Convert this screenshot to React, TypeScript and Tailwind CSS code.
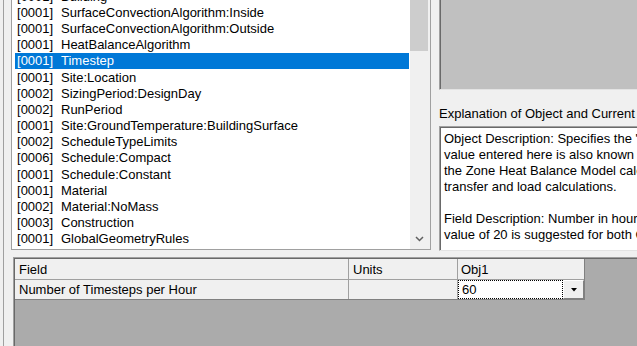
import React from "react";

const items: [string, string][] = [
  ["0001", "Building"],
  ["0001", "SurfaceConvectionAlgorithm:Inside"],
  ["0001", "SurfaceConvectionAlgorithm:Outside"],
  ["0001", "HeatBalanceAlgorithm"],
  ["0001", "Timestep"],
  ["0001", "Site:Location"],
  ["0002", "SizingPeriod:DesignDay"],
  ["0002", "RunPeriod"],
  ["0001", "Site:GroundTemperature:BuildingSurface"],
  ["0002", "ScheduleTypeLimits"],
  ["0006", "Schedule:Compact"],
  ["0001", "Schedule:Constant"],
  ["0001", "Material"],
  ["0002", "Material:NoMass"],
  ["0003", "Construction"],
  ["0001", "GlobalGeometryRules"],
];

const explanation = [
  'Object Description: Specifies the "basic" timestep for the simulation. The',
  "value entered here is also known as the Zone Timestep.  This is used in",
  "the Zone Heat Balance Model calculation as the driving timestep for heat",
  "transfer and load calculations.",
  "",
  "Field Description:  Number in hour: normal validity 4 to 60: 6 suggested",
  "value of 20 is suggested for both ConductionFiniteDifference and",
];

export default function App() {
  return (
    <div
      className="w-[637px] h-[346px] overflow-hidden bg-[#f0f0f0] flex text-[13px] leading-none text-black"
      style={{ fontFamily: '"Liberation Sans", Arial, sans-serif' }}
    >
      {/* left strip */}
      <div className="w-[11px] shrink-0 pl-[3px]">
        <div className="w-px h-full bg-[#a0a0a0]" />
      </div>

      {/* main column */}
      <div className="flex-1 flex flex-col min-w-0">
        {/* top section */}
        <div className="h-[251px] flex shrink-0">
          {/* listbox */}
          <div className="w-[420px] h-[250px] flex border-l border-b border-[#a0a0a0] shrink-0">
            <div className="w-[398px] bg-white overflow-hidden">
              <div className="mt-[-12px] pl-[3px] pr-[1px]">
                {items.map(([n, name], i) => {
                  const sel = name === "Timestep";
                  return (
                    <div
                      key={i}
                      className={
                        "h-[16.2px] flex items-center whitespace-nowrap " +
                        (sel ? "bg-[#0078d7] text-white" : "")
                      }
                    >
                      <span className="w-[46px] pl-[2px] shrink-0">[{n}]</span>
                      <span>{name}</span>
                    </div>
                  );
                })}
              </div>
            </div>
            {/* scrollbar */}
            <div className="w-[20px] bg-[#f0f0f0] flex flex-col justify-between">
              <div className="w-[18px] h-[51px] bg-[#cdcdcd]" />
              <div className="h-[20px] flex items-center justify-center pr-[2px]">
                <svg width="9" height="6" viewBox="0 0 9 6">
                  <path d="M1 1 L4.5 4.5 L8 1" fill="none" stroke="#606060" strokeWidth="1.5" />
                </svg>
              </div>
            </div>
            <div className="w-px bg-[#a0a0a0]" />
          </div>

          <div className="w-[8px] shrink-0" />

          {/* right column */}
          <div className="flex-1 flex flex-col min-w-0">
            <div className="h-[90px] shrink-0 bg-[#c0c0c0] border-l border-b border-l-[#a0a0a0] border-b-[#e3e3e3] shadow-[inset_1px_0_0_#696969]" />
            <div className="h-[36px] shrink-0 flex items-center whitespace-nowrap pt-[10px]">
              Explanation of Object and Current Field
            </div>
            <div className="flex-1 bg-white border-l border-t border-b border-l-[#a0a0a0] border-t-[#a0a0a0] border-b-[#e3e3e3] shadow-[inset_1px_1px_0_#696969] overflow-hidden pl-[4px] pt-[3px]">
              {explanation.map((l, i) => (
                <div key={i} className="h-[16px] flex items-center whitespace-nowrap">
                  {l || "\u00a0"}
                </div>
              ))}
            </div>
          </div>
        </div>

        <div className="h-[6px] shrink-0" />

        {/* grid */}
        <div className="flex-1 ml-[2px] bg-[#ababab] border-l border-t border-[#a0a0a0] shadow-[inset_1px_1px_0_#696969] pl-px pt-px">
          <div className="w-[570px] border-r border-b border-[#808080]">
            <div className="flex h-[21px] bg-[#f0f0f0] border-b border-[#a0a0a0]">
              <div className="w-[334px] border-r border-[#a0a0a0] pl-[4px] flex items-center">Field</div>
              <div className="w-[109px] border-r border-[#a0a0a0] pl-[4px] flex items-center">Units</div>
              <div className="flex-1 pl-[3px] flex items-center">Obj1</div>
            </div>
            <div className="flex h-[19px] bg-[#f0f0f0]">
              <div className="w-[334px] border-r border-[#a0a0a0] pl-[4px] flex items-center whitespace-nowrap">
                Number of Timesteps per Hour
              </div>
              <div className="w-[109px] border-r border-[#a0a0a0]" />
              <div className="flex-1 flex">
                <div className="flex-1 bg-white border border-dotted border-black pl-[3px] flex items-center">60</div>
                <div className="w-[21px] bg-[#f0f0f0] border-t border-l border-white border-r border-b border-r-[#808080] border-b-[#808080] flex items-center justify-center">
                  <svg width="6" height="4" viewBox="0 0 6 4">
                    <path d="M0 0 H6 L3 3.5 Z" fill="#000" />
                  </svg>
                </div>
              </div>
            </div>
          </div>
        </div>
      </div>
    </div>
  );
}
